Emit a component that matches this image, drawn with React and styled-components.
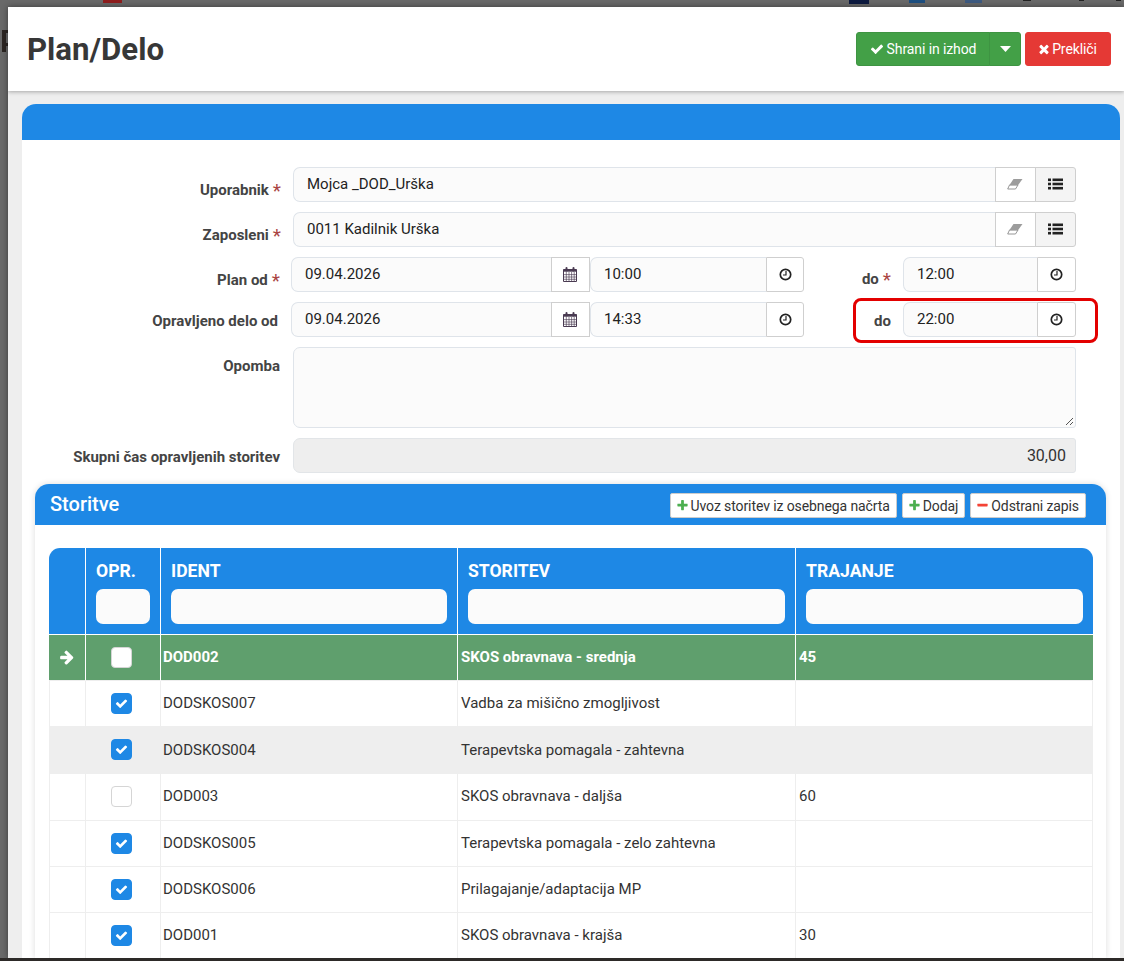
import React from "react";
import styled, { createGlobalStyle } from "styled-components";

const Global = createGlobalStyle`
  html, body { margin: 0; padding: 0; height: 100%; overflow: hidden; }
  body { font-family: Roboto, "Liberation Sans", sans-serif; color: #333; background: #6a6a6a; }
  * { box-sizing: border-box; }
`;
const Screen = styled.div`
  position: relative; width: 1124px; height: 961px; overflow: hidden; background: #696969;
  padding: 7px 0 3px 8px; display: flex;
`;
const BackdropBit = styled.div`
  position: absolute; left: ${p => p.$x}px; top: ${p => p.$y || 0}px; width: ${p => p.$w}px; height: ${p => p.$h}px; background: ${p => p.$c};
`;
const BottomEdge = styled.div`
  position: absolute; left: 0; right: 0; bottom: 0; height: 3px; background: #2d2a28;
`;
const Modal = styled.div`
  flex: 1; min-width: 0; background: #eeeeee; display: flex; flex-direction: column; overflow: hidden; position: relative;
  box-shadow: 0 0 6px rgba(0,0,0,.45);
`;
const Header = styled.header`
  height: 84px; flex: none; background: #fff; box-shadow: 0 1px 4px rgba(0,0,0,.3); position: relative;
  display: flex; align-items: flex-start; justify-content: space-between; padding: 25px 13px 0 19px;
`;
const Title = styled.h1`
  margin: 0; font-size: 31.2px; font-weight: 700; line-height: 36px; color: #373737;
`;
const Actions = styled.div`display: flex; gap: 4px; align-items: flex-start;`;
const BtnGroup = styled.div`display: flex;`;
const ActionBtn = styled.button`
  height: 34px; border: 1px solid ${p => p.$border}; background: ${p => p.$bg}; color: #fff; padding: 0 ${p => p.$pr || 0}px 0 0;
  font: 400 14px/20px Roboto, sans-serif; border-radius: ${p => p.$radius || "3px"}; display: flex; align-items: center; gap: ${p => p.$gap ?? 3}px;
  letter-spacing: -0.1px; width: ${p => p.$w}px; margin-left: ${p => p.$ml || 0}px; justify-content: center;
`;
const Body = styled.div`flex: 1; min-height: 0; padding: 13px 4px 0 14px; display: flex;`;
const Panel = styled.section`
  flex: 1; min-width: 0; background: #fff; border-radius: 14px 14px 0 0; display: flex; flex-direction: column;
`;
const PanelBar = styled.div`
  height: 36px; flex: none; background: #1e88e5; border-radius: 14px 14px 0 0; border-bottom: 1px solid #1e88e5;
`;
const Form = styled.div`padding: 27px 0 0 0; display: flex; flex-direction: column;`;
const Row = styled.div`
  display: flex; height: ${p => p.$h || 35}px; margin-bottom: ${p => p.$mb ?? 10}px; align-items: flex-start;
`;
const Label = styled.label`
  width: ${p => p.$w || 259}px; flex: none; text-align: right; font-size: 15px; font-weight: 700; color: #444;
  line-height: 20px; padding-top: ${p => p.$pt ?? 12}px; padding-right: ${p => p.$pr || 0}px; white-space: nowrap;
`;
const Req = styled.span`
  color: #a94442; font-weight: 400; font-size: 19px; line-height: 14px; margin-left: 4px; vertical-align: -2px;
`;
const Group = styled.div`
  display: flex; width: ${p => p.$w}px; height: 35px; margin-left: ${p => p.$ml || 0}px; flex: none;
`;
const Field = styled.div`
  flex: 1; min-width: 0; height: 35px; background: #fbfbfb; border: 1px solid #dfe4ea; border-right: 0;
  border-radius: 7px 0 0 7px; font-size: 15px; line-height: 33px; padding-left: 13px; color: #222;
`;
const AddOn = styled.div`
  width: ${p => p.$w || 39}px; flex: none; height: 35px; border: 1px solid #cfcfcf;
  background: ${p => p.$grey ? "#f4f4f4" : "#fff"}; display: flex; align-items: center; justify-content: center;
  margin-left: ${p => p.$overlap ? -1 : 0}px; border-radius: ${p => p.$end ? "0 3px 3px 0" : 0};
  padding-bottom: 1px; color: #333;
`;
const Highlight = styled.div`
  position: absolute; left: 853px; top: 298px; width: 245px; height: 45px; border: 3px solid #e30000; border-radius: 8px; pointer-events: none;
`;
const Notes = styled.div`
  width: 783px; height: 81px; margin-left: 12px; border: 1px solid #dfe4ea; border-radius: 7px 3px 3px 7px; background: #fbfbfb; position: relative; flex: none;
`;
const Grip = styled.svg`position: absolute; right: 1px; bottom: 1px;`;
const ReadOnly = styled.div`
  width: 783px; height: 35px; margin-left: 12px; flex: none; background: #eee; border: 1px solid #e2e5e8; border-radius: 7px 3px 3px 7px;
  text-align: right; padding-right: 9px; font-size: 16px; line-height: 33px; color: #333;
`;
const SubPanel = styled.section`
  margin: 11px 14px 0 13px; flex: 1; min-height: 0; border-radius: 14px 14px 0 0; box-shadow: 0 0 6px rgba(0,0,0,.14);
  background: #fff; display: flex; flex-direction: column; overflow: hidden;
`;
const SubHead = styled.div`
  height: 41px; flex: none; background: #1e88e5; display: flex; align-items: center; justify-content: space-between; padding: 0 20px 0 15px;
`;
const SubTitle = styled.h2`margin: 0; font-size: 20px; font-weight: 500; color: #fff; line-height: 24px; position: relative; top: -1px;`;
const Tools = styled.div`display: flex; gap: 5px; margin-top: 2px;`;
const ToolBtn = styled.button`
  height: 25px; padding: 0 6px 0 5px; background: #fff; border: 1px solid #ccc; border-radius: 2px; font: 400 14px/20px Roboto, sans-serif; color: #333;
  display: flex; align-items: center; gap: 2px; white-space: nowrap; letter-spacing: -0.1px;
`;
const TableWrap = styled.div`padding: 23px 12px 0 14px; flex: 1; min-height: 0; overflow: hidden;`;
const Table = styled.table`
  width: 1044px; border-collapse: separate; border-spacing: 0; table-layout: fixed;
`;
const Th = styled.th`
  background: #1e88e5; height: 87px; padding: 0 10px; vertical-align: top; text-align: left; color: #fff;
  font-size: 17.6px; font-weight: 700; line-height: 22px; border-right: ${p => p.$last ? "0" : "1px solid #fff"}; border-bottom: 1px solid #fff;
  border-radius: ${p => p.$r || 0};
`;
const ThText = styled.div`padding-top: 12px; height: 41px;`;
const Filter = styled.div`height: 35px; background: #fbfbfb; border-radius: 7px; width: ${p => p.$w || "100%"};`;
const Td = styled.td`
  height: ${p => p.$h || 46}px; padding: 0 3px ${p => p.$pb ?? 1}px ${p => p.$pl ?? 3}px; font-size: 15px; color: ${p => p.$sel ? "#fff" : "#333"}; font-weight: ${p => p.$sel ? 700 : 400};
  background: ${p => p.$sel ? "#5f9f6d" : p.$alt ? "#eeeeee" : "#fff"};
  border-right: ${p => p.$sel ? (p.$last ? "0" : "1px solid #fff") : "1px solid #eeeeee"}; border-bottom: 1px solid #eeeeee;
  border-left: ${p => p.$first ? "1px solid #eeeeee" : "0"};
  text-align: ${p => p.$center ? "center" : "left"}; vertical-align: middle; white-space: nowrap;
`;
const Check = styled.span`
  display: inline-flex; width: 21px; height: 21px; border-radius: 4px; align-items: center; justify-content: center; vertical-align: middle;
  margin-right: 3px; background: ${p => p.$on ? "#1e88e5" : "#fff"}; border: 1px solid ${p => p.$on ? "#1e88e5" : "#d5d5d5"}; color: #fff;
`;
const ArrowBox = styled.div`display: flex; justify-content: center;`;
const EraserSvg = styled.svg`margin: -1px 1px 0 0;`;
const CalendarSvg = styled.svg`margin-right: 1px;`;

const Fa = ({ d, size = 14, color = "currentColor" }) => (
  <svg width={size} height={size} viewBox="0 0 1792 1792" fill={color} style={{ flex: "none" }}><path d={d} /></svg>
);
const CHECK = "M1671 566q0 40-28 68l-724 724-136 136q-28 28-68 28t-68-28l-136-136-362-362q-28-28-28-68t28-68l136-136q28-28 68-28t68 28l294 295 656-657q28-28 68-28t68 28l136 136q28 28 28 68z";
const TIMES = "M1490 1322q0 40-28 68l-136 136q-28 28-68 28t-68-28l-294-294-294 294q-28 28-68 28t-68-28l-136-136q-28-28-28-68t28-68l294-294-294-294q-28-28-28-68t28-68l136-136q28-28 68-28t68 28l294 294 294-294q28-28 68-28t68 28l136 136q28 28 28 68t-28 68l-294 294 294 294q28 28 28 68z";
const PLUS = "M1600 736v192q0 40-28 68t-68 28h-416v416q0 40-28 68t-68 28h-192q-40 0-68-28t-28-68v-416h-416q-40 0-68-28t-28-68v-192q0-40 28-68t68-28h416v-416q0-40 28-68t68-28h192q40 0 68 28t28 68v416h416q40 0 68 28t28 68z";
const MINUS = "M1600 736v192q0 40-28 68t-68 28h-1216q-40 0-68-28t-28-68v-192q0-40 28-68t68-28h1216q40 0 68 28t28 68z";
const ARROW = "M1600 960q0 54-37 91l-651 651q-39 37-91 37-51 0-90-37l-75-75q-38-38-38-91t38-91l293-293h-704q-52 0-84.5-37.5t-32.5-90.5v-128q0-53 32.5-90.5t84.5-37.5h704l-293-294q-38-36-38-90t38-90l75-75q38-38 90-38 53 0 91 38l651 651q37 35 37 90z";

const Caret = () => (
  <svg width="11" height="6" viewBox="0 0 11 6"><path d="M0 0h11L5.5 6z" fill="#fff" /></svg>
);
const Eraser = () => (
  <EraserSvg width="16" height="12" viewBox="0 0 16 12">
    <path d="M2.5 7 L11 7 L8.5 11 L.7 11 Z" fill="#fff" stroke="#8a8a8a" strokeWidth=".9" />
    <path d="M6.5 1 L15.5 1 L11 7.2 L2.3 7.2 Z" fill="#9c9c9c" />
  </EraserSvg>
);
const Calendar = () => (
  <CalendarSvg width="14" height="15" viewBox="0 0 14 15" fill="none">
    <path d="M.5 2.5h13v12H.5z" stroke="#4a3b52" />
    <path d="M.5 2.5h13v2.2H.5z" fill="#4a3b52" />
    <path d="M3.5 1v2.4M10.5 1v2.4" stroke="#4a3b52" strokeWidth="2" strokeLinecap="round" />
    <path d="M.5 7.6h13M.5 10h13M.5 12.3h13M3.3 5v9M6 5v9M8.6 5v9M11.2 5v9" stroke="#4a3b52" strokeWidth=".65" />
  </CalendarSvg>
);
const Clock = () => (
  <svg width="13" height="13" viewBox="0 0 13 13" fill="none">
    <circle cx="6.5" cy="6.5" r="5.2" stroke="#222" strokeWidth="1.7" />
    <path d="M7 3v4H4" stroke="#222" strokeWidth="1.2" />
  </svg>
);
const ListIcon = () => (
  <svg width="15" height="12" viewBox="0 0 15 12" fill="#222">
    <rect x="0" y="0.5" width="3" height="2.6" /><rect x="4.5" y="0.5" width="10.5" height="2.6" />
    <rect x="0" y="4.7" width="3" height="2.6" /><rect x="4.5" y="4.7" width="10.5" height="2.6" />
    <rect x="0" y="8.9" width="3" height="2.6" /><rect x="4.5" y="8.9" width="10.5" height="2.6" />
  </svg>
);

const rows = [
  { id: "DODSKOS007", name: "Vadba za mišično zmogljivost", dur: "", on: true, h: 46 },
  { id: "DODSKOS004", name: "Terapevtska pomagala - zahtevna", dur: "", on: true, alt: true, h: 47 },
  { id: "DOD003", name: "SKOS obravnava - daljša", dur: "60", on: false, h: 47, pb: 3 },
  { id: "DODSKOS005", name: "Terapevtska pomagala - zelo zahtevna", dur: "", on: true, h: 46 },
  { id: "DODSKOS006", name: "Prilagajanje/adaptacija MP", dur: "", on: true, h: 46 },
  { id: "DOD001", name: "SKOS obravnava - krajša", dur: "30", on: true, h: 46 },
];

const LookupRow = ({ label, value }) => (
  <Row>
    <Label $pt={13}>{label}<Req>*</Req></Label>
    <Group $w={783} $ml={12}>
      <Field>{value}</Field>
      <AddOn $w={41}><Eraser /></AddOn>
      <AddOn $w={41} $overlap $grey $end><ListIcon /></AddOn>
    </Group>
  </Row>
);

const TimeRow = ({ label, date, from, to, req, toReq, pt, toPt, pr }) => (
  <Row>
    <Label $pt={pt} $pr={pr}>{label}{req && <Req>*</Req>}</Label>
    <Group $w={299} $ml={10}>
      <Field>{date}</Field>
      <AddOn><Calendar /></AddOn>
    </Group>
    <Group $w={214}>
      <Field>{from}</Field>
      <AddOn $w={38} $end><Clock /></AddOn>
    </Group>
    <Label $w={87} $pt={toPt}>do{toReq && <Req>*</Req>}</Label>
    <Group $w={173} $ml={12}>
      <Field>{to}</Field>
      <AddOn $end><Clock /></AddOn>
    </Group>
  </Row>
);

export default function App() {
  return (
    <Screen>
      <Global />
      <BackdropBit $x={103} $w={19} $h={3} $c="#8f1d1d" />
      <BackdropBit $x={849} $w={20} $h={4} $c="#0d1a40" />
      <BackdropBit $x={909} $w={16} $h={3} $c="#1d4f80" />
      <BackdropBit $x={965} $w={17} $h={3} $c="#3d5a80" />
      <BackdropBit $x={1023} $w={8} $h={1} $c="#222" />
      <BackdropBit $x={1079} $w={5} $h={1} $c="#222" />
      <BackdropBit $x={1116} $w={5} $h={1} $c="#222" />
      <BackdropBit $x={2} $y={30} $w={4} $h={22} $c="#2c2622" />
      <BackdropBit $x={6} $y={30} $w={2} $h={3} $c="#2c2622" />
      <BackdropBit $x={6} $y={43} $w={2} $h={3} $c="#2c2622" />
      <Modal>
        <Header>
          <Title>Plan/Delo</Title>
          <Actions>
            <BtnGroup>
              <ActionBtn $bg="#43a047" $border="#3e9442" $radius="3px 0 0 3px" $w={134}><Fa d={CHECK} />Shrani in izhod</ActionBtn>
              <ActionBtn $bg="#43a047" $border="#3e9442" $radius="0 3px 3px 0" $w={32} $ml={-1}><Caret /></ActionBtn>
            </BtnGroup>
            <ActionBtn $bg="#e53935" $border="#e53935" $w={86} $gap={1} $pr={2}><Fa d={TIMES} />Prekliči</ActionBtn>
          </Actions>
        </Header>
        <Body>
          <Panel>
            <PanelBar />
            <Form>
              <LookupRow label="Uporabnik" value="Mojca _DOD_Urška" />
              <LookupRow label="Zaposleni" value="0011 Kadilnik Urška" />
              <TimeRow label="Plan od" req date="09.04.2026" from="10:00" toReq to="12:00" pt={13} toPt={12} pr={1} />
              <TimeRow label="Opravljeno delo od" date="09.04.2026" from="14:33" to="22:00" pt={9} toPt={9} pr={3} />
              <Row $h={81}>
                <Label $pt={9} $pr={1}>Opomba</Label>
                <Notes>
                  <Grip width="10" height="10" viewBox="0 0 10 10"><path d="M9 2L2 9M9 6L6 9" stroke="#555" strokeWidth="1" /></Grip>
                </Notes>
              </Row>
              <Row $mb={0}>
                <Label $pt={9} $pr={1}>Skupni čas opravljenih storitev</Label>
                <ReadOnly>30,00</ReadOnly>
              </Row>
            </Form>
            <SubPanel>
              <SubHead>
                <SubTitle>Storitve</SubTitle>
                <Tools>
                  <ToolBtn><Fa d={PLUS} size={13} color="#4caf50" />Uvoz storitev iz osebnega načrta</ToolBtn>
                  <ToolBtn><Fa d={PLUS} size={13} color="#4caf50" />Dodaj</ToolBtn>
                  <ToolBtn><Fa d={MINUS} size={13} color="#f44336" />Odstrani zapis</ToolBtn>
                </Tools>
              </SubHead>
              <TableWrap>
                <Table>
                  <colgroup>
                    <col style={{ width: 37 }} /><col style={{ width: 75 }} /><col style={{ width: 297 }} /><col style={{ width: 338 }} /><col style={{ width: 297 }} />
                  </colgroup>
                  <thead>
                    <tr>
                      <Th $r="11px 0 0 0" />
                      <Th><ThText>OPR.</ThText><Filter $w="54px" /></Th>
                      <Th><ThText>IDENT</ThText><Filter /></Th>
                      <Th><ThText>STORITEV</ThText><Filter /></Th>
                      <Th $last $r="0 11px 0 0"><ThText>TRAJANJE</ThText><Filter /></Th>
                    </tr>
                  </thead>
                  <tbody>
                    <tr>
                      <Td $sel $center><ArrowBox><Fa d={ARROW} size={16} color="#fff" /></ArrowBox></Td>
                      <Td $sel $center><Check /></Td>
                      <Td $sel $pl={2}>DOD002</Td>
                      <Td $sel>SKOS obravnava - srednja</Td>
                      <Td $sel $last>45</Td>
                    </tr>
                    {rows.map(r => (
                      <tr key={r.id}>
                        <Td $first $alt={r.alt} $h={r.h} />
                        <Td $center $alt={r.alt} $h={r.h}><Check $on={r.on}>{r.on && <Fa d={CHECK} size={13} />}</Check></Td>
                        <Td $alt={r.alt} $h={r.h} $pl={2} $pb={r.pb}>{r.id}</Td>
                        <Td $alt={r.alt} $h={r.h} $pb={r.pb}>{r.name}</Td>
                        <Td $alt={r.alt} $h={r.h} $pb={r.pb} $last>{r.dur}</Td>
                      </tr>
                    ))}
                  </tbody>
                </Table>
              </TableWrap>
            </SubPanel>
          </Panel>
        </Body>
      </Modal>
      <Highlight />
      <BottomEdge />
    </Screen>
  );
}
